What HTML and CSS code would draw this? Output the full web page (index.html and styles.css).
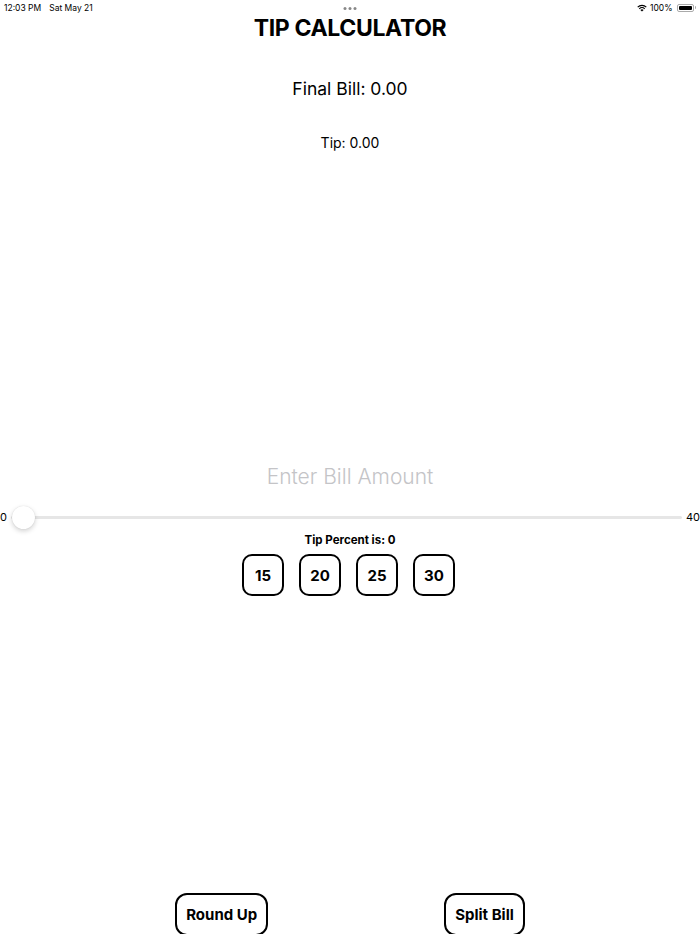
FILE: index.html
```html
<!DOCTYPE html>
<html>
<head>
<meta charset="utf-8">
<link rel="stylesheet" href="styles.css">
</head>
<body>
<div class="screen">
  <div class="status">
    <div class="status-left"><span>12:03 PM</span><span>Sat May 21</span></div>
    <div class="dots"><i></i><i></i><i></i></div>
    <div class="status-right">
      <svg class="wifi" width="10" height="8" viewBox="0 0 10 8"><path d="M5 7.6 L3.4 5.9 A2.3 2.3 0 0 1 6.6 5.9 Z" fill="#000"/><path d="M1.9 4.4 A4.4 4.4 0 0 1 8.1 4.4 L7.3 5.2 A3.3 3.3 0 0 0 2.7 5.2 Z" fill="#000"/><path d="M0.3 2.8 A6.7 6.7 0 0 1 9.7 2.8 L8.9 3.6 A5.6 5.6 0 0 0 1.1 3.6 Z" fill="#000"/></svg>
      <span>100%</span>
      <div class="battery"><div class="battery-fill"></div></div><div class="battery-cap"></div>
    </div>
  </div>
  <h1 class="title">TIP CALCULATOR</h1>
  <div class="final">Final Bill: 0.00</div>
  <div class="tip">Tip: 0.00</div>
  <div class="spacer"></div>
  <div class="input">Enter Bill Amount</div>
  <div class="slider-row">
    <span class="lbl">0</span>
    <div class="track"><div class="thumb"></div></div>
    <span class="lbl">40</span>
  </div>
  <div class="percent">Tip Percent is: 0</div>
  <div class="chips">
    <div class="chip">15</div>
    <div class="chip">20</div>
    <div class="chip">25</div>
    <div class="chip">30</div>
  </div>
  <div class="grow"></div>
  <div class="bottom">
    <div class="btn">Round Up</div>
    <div class="btn">Split Bill</div>
  </div>
</div>
</body>
</html>
```
FILE: styles.css
```css
* { box-sizing: border-box; }
html, body { margin: 0; padding: 0; background: #fff; }
body { font-family: Inter, "Liberation Sans", sans-serif; color: #000; }
.screen { width: 700px; height: 934px; display: flex; flex-direction: column; align-items: center; overflow: hidden; }
.status { width: 100%; height: 14px; display: flex; align-items: center; justify-content: space-between; padding: 0 4px; font-size: 8.5px; position: relative; }
.status-left { display: flex; gap: 8px; padding-top: 1px; }
.dots { position: absolute; left: 50%; top: 7px; transform: translateX(-50%); display: flex; gap: 2px; }
.dots i { width: 3px; height: 3px; border-radius: 50%; background: #888; display: block; }
.status-right { display: flex; align-items: center; gap: 3px; padding-top: 1px; }
.battery { width: 17px; height: 8px; border: 1px solid #aaa; border-radius: 2px; padding: 1px; margin-left: 1px; }
.battery-fill { width: 100%; height: 100%; background: #000; border-radius: 1px; }
.battery-cap { width: 1.5px; height: 3px; background: #aaa; margin-left: -2px; border-radius: 0 1px 1px 0; }
.title { margin: 0; font-size: 23px; font-weight: 700; letter-spacing: -0.35px; line-height: 28px; }
.final { font-size: 17.5px; margin-top: 35px; line-height: 24px; }
.tip { font-size: 14px; margin-top: 33px; line-height: 18px; }
.spacer { height: 312px; }
.input { font-size: 21px; color: #c4c4c7; font-weight: 300; line-height: 26px; }
.slider-row { width: 100%; display: flex; align-items: center; margin-top: 13px; height: 28px; }
.lbl { font-size: 11px; }
.track { flex: 1; height: 3px; background: #e6e6e6; border-radius: 2px; position: relative; margin: 0 4px; }
.thumb { position: absolute; left: 1px; top: 50%; width: 23px; height: 23px; margin-top: -11.5px; border-radius: 50%; background: #fff; box-shadow: 0 2px 5px rgba(0,0,0,0.18), 0 0 1px rgba(0,0,0,0.15); }
.percent { font-size: 11.5px; font-weight: 700; margin-top: 1px; line-height: 16px; }
.chips { display: flex; gap: 15px; margin-top: 6px; margin-right: 3px; }
.chip { width: 42px; height: 42px; border: 2px solid #000; border-radius: 10px; display: flex; align-items: center; justify-content: center; font-size: 15px; font-weight: 700; }
.grow { flex: 1; }
.bottom { display: flex; gap: 176px; margin-bottom: -2px; }
.btn { height: 43px; border: 2px solid #000; border-radius: 12px; padding: 0 9px; display: flex; align-items: center; font-size: 15px; font-weight: 700; }
```
